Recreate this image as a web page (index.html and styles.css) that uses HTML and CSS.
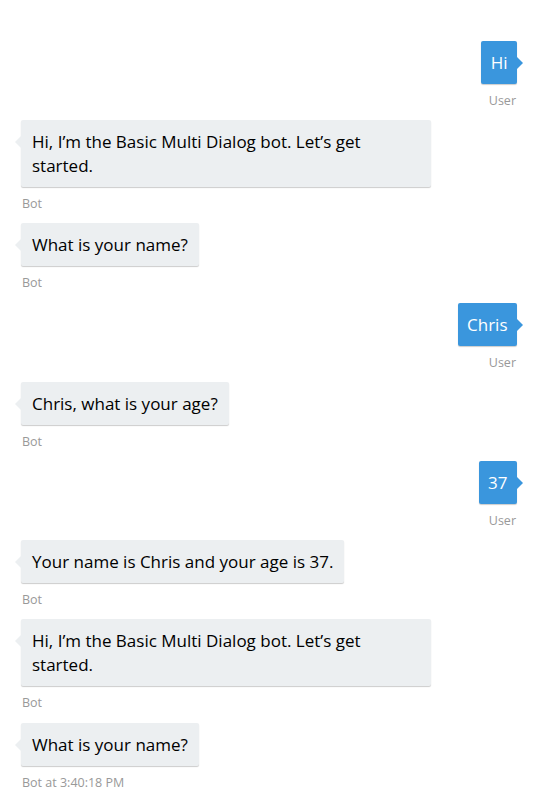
FILE: index.html
```html
<!DOCTYPE html>
<html lang="en">
<head>
<meta charset="utf-8">
<title>Chat</title>
<link rel="stylesheet" href="styles.css">
</head>
<body>
<div class="chat">
  <div class="msg user"><div class="bubble">Hi</div><div class="meta">User</div></div>
  <div class="msg bot"><div class="bubble">Hi, I’m the Basic Multi Dialog bot. Let’s get started.</div><div class="meta">Bot</div></div>
  <div class="msg bot"><div class="bubble">What is your name?</div><div class="meta">Bot</div></div>
  <div class="msg user"><div class="bubble">Chris</div><div class="meta">User</div></div>
  <div class="msg bot"><div class="bubble">Chris, what is your age?</div><div class="meta">Bot</div></div>
  <div class="msg user"><div class="bubble">37</div><div class="meta">User</div></div>
  <div class="msg bot"><div class="bubble">Your name is Chris and your age is 37.</div><div class="meta">Bot</div></div>
  <div class="msg bot"><div class="bubble">Hi, I’m the Basic Multi Dialog bot. Let’s get started.</div><div class="meta">Bot</div></div>
  <div class="msg bot"><div class="bubble">What is your name?</div><div class="meta">Bot at 3:40:18 PM</div></div>
</div>
</body>
</html>
```
FILE: styles.css
```css
html, body {
  margin: 0;
  padding: 0;
  background: #ffffff;
}
body {
  font-family: "Open Sans", "Noto Sans", "DejaVu Sans", sans-serif;
}
.chat {
  display: flex;
  flex-direction: column;
  padding: 41px 29px 0 21px;
}
.msg {
  display: flex;
  flex-direction: column;
  margin-bottom: 11.2px;
}
.msg.user { align-items: flex-end; }
.msg.bot { align-items: flex-start; }
.bubble {
  position: relative;
  box-sizing: border-box;
  max-width: 410px;
  padding: 10px 11px 9px;
  font-size: 17px;
  line-height: 24px;
  border-radius: 2px;
  box-shadow: 0 1px 1px rgba(0, 0, 0, 0.2);
}
.bot .bubble {
  background: #eceff1;
  color: #000;
}
.user .bubble {
  background: #3a96dd;
  color: #fff;
  padding-left: 9.5px;
  padding-right: 9.5px;
}
.bubble::before {
  content: "";
  position: absolute;
  top: 16px;
  border-top: 6px solid transparent;
  border-bottom: 6px solid transparent;
}
.bot .bubble::before {
  left: -6px;
  border-right: 6px solid #eceff1;
}
.user .bubble::before {
  right: -6px;
  border-left: 6px solid #3a96dd;
}
.meta {
  margin-top: 9px;
  font-size: 12.5px;
  line-height: 16px;
  color: #999;
  padding: 0 1px;
}
```
